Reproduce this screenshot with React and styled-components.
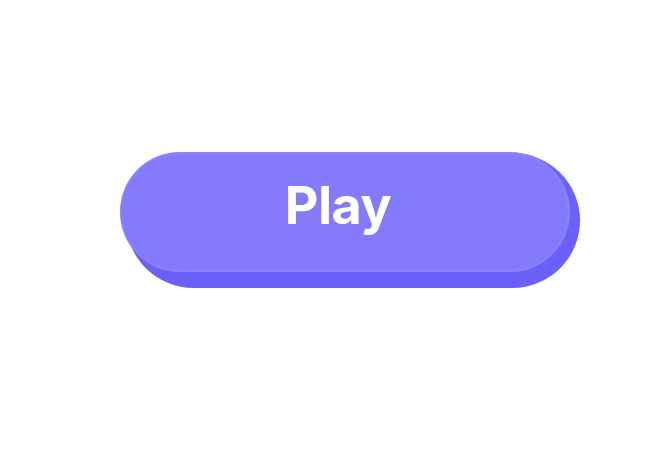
import React from "react";
import styled, { createGlobalStyle } from "styled-components";

const Global = createGlobalStyle`
  html, body { margin: 0; padding: 0; background: #ffffff; }
  body { font-family: Inter, "Noto Sans", sans-serif; }
`;

const Page = styled.div`
  width: 671px;
  height: 450px;
  box-sizing: border-box;
  padding: 153px 0 0 126px;
  display: flex;
  align-items: flex-start;
`;

const Base = styled.button`
  width: 454px;
  height: 135px;
  border: none;
  padding: 0;
  margin: 0;
  border-radius: 68px;
  background: #6b60fa;
  display: flex;
  align-items: flex-start;
  cursor: pointer;
`;

const Face = styled.span`
  width: 450px;
  height: 120px;
  margin-left: -6px;
  margin-top: -1px;
  flex-shrink: 0;
  border-radius: 60px;
  background: #837afc;
  box-shadow: inset 0 0 5px rgba(160, 152, 255, 0.7);
  display: flex;
  align-items: center;
  justify-content: center;
  box-sizing: border-box;
  padding: 0 14px 14px 0;
  color: #ffffff;
  font-family: Inter, "Noto Sans", sans-serif;
  font-weight: 700;
  font-size: 52px;
  letter-spacing: -0.5px;
`;

export default function App() {
  return (
    <>
      <Global />
      <Page>
        <Base>
          <Face>Play</Face>
        </Base>
      </Page>
    </>
  );
}
